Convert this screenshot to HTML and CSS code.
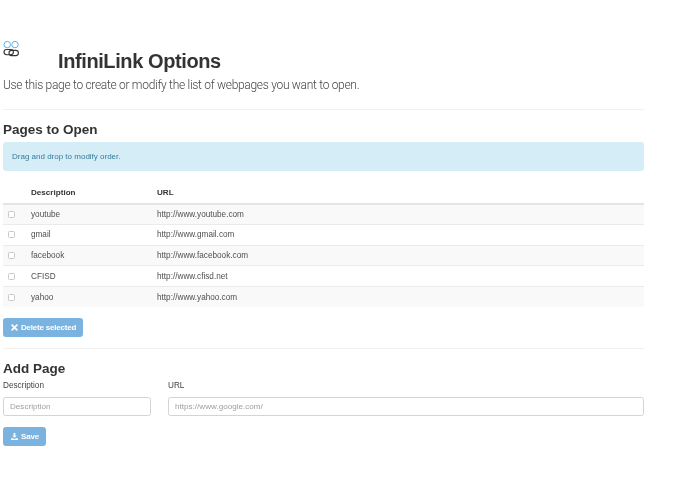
FILE: index.html
```html
<!DOCTYPE html>
<html lang="en">
<head>
<meta charset="utf-8">
<title>InfiniLink Options</title>
<link rel="stylesheet" href="styles.css">
</head>
<body>
<main class="page">
  <header class="head">
    <svg class="logo" width="18" height="16" viewBox="0 0 18 16" fill="none" stroke-width="1">
      <g stroke="#62b0ea"><circle cx="4.3" cy="3.6" r="3.2"/><circle cx="12" cy="3.6" r="3.2"/></g>
      <g stroke="#333" stroke-width="1.1"><rect x="1" y="8.5" width="9.4" height="5.2" rx="2.6"/><rect x="6" y="9.4" width="9.4" height="5.2" rx="2.6"/></g>
    </svg>
    <h1 class="title">InfiniLink Options</h1>
  </header>
  <p class="lead">Use this page to create or modify the list of webpages you want to open.</p>
  <hr class="rule rule-top">
  <h2 class="section">Pages to Open</h2>
  <div class="alert">Drag and drop to modify order.</div>
  <table class="pages">
    <thead>
      <tr><th class="c-check"></th><th class="c-desc">Description</th><th>URL</th></tr>
    </thead>
    <tbody>
      <tr><td><span class="check"></span></td><td>youtube</td><td>http://www.youtube.com</td></tr>
      <tr><td><span class="check"></span></td><td>gmail</td><td>http://www.gmail.com</td></tr>
      <tr><td><span class="check"></span></td><td>facebook</td><td>http://www.facebook.com</td></tr>
      <tr><td><span class="check"></span></td><td>CFISD</td><td>http://www.cfisd.net</td></tr>
      <tr><td><span class="check"></span></td><td>yahoo</td><td>http://www.yahoo.com</td></tr>
    </tbody>
  </table>
  <button class="btn" type="button">
    <svg class="ico" width="7" height="7" viewBox="0 0 7 7"><path d="M1.2 0 3.5 2.2 5.8 0 7 1.2 4.7 3.5 7 5.8 5.8 7 3.5 4.7 1.2 7 0 5.8 2.3 3.5 0 1.2Z" fill="currentColor"/></svg>
    Delete selected
  </button>
  <hr class="rule rule-mid">
  <h2 class="section section-add">Add Page</h2>
  <form class="form">
    <label class="field field-desc"><span class="label">Description</span><input class="input" type="text" placeholder="Description"></label>
    <label class="field field-url"><span class="label">URL</span><input class="input" type="text" placeholder="https://www.google.com/"></label>
  </form>
  <button class="btn btn-save" type="button">
    <svg class="ico" width="7" height="7" viewBox="0 0 9 9"><path d="M3.4 0H5.6V3.4H7.4L4.5 6.2 1.6 3.4H3.4ZM0 6.6H2.4L4.5 7.8 6.6 6.6H9V9H0Z" fill="currentColor"/></svg>
    Save
  </button>
</main>
</body>
</html>
```
FILE: styles.css
```css
* { box-sizing: border-box; }
html, body { margin: 0; background: #fff; }
body { font-family: "Liberation Sans", Arial, sans-serif; color: #333; font-size: 8.2px; }
.page { width: 644px; padding: 41px 0 0 3px; filter: blur(0.3px); }
.head { display: flex; align-items: flex-start; height: 33px; }
.logo { flex: none; display: block; }
.title { margin: 8px 0 0 37px; font-size: 20px; line-height: 24px; font-weight: 700; letter-spacing: -0.4px; color: #333; }
.lead { margin: 3px 0 0; font-family: Roboto, "Liberation Sans", sans-serif; font-size: 12px; line-height: 17px; font-weight: 300; letter-spacing: -0.3px; color: #444; }
.rule { border: 0; border-top: 1px solid #f1f1f1; margin: 0; }
.rule-top { margin-top: 15px; }
.section { margin: 11px 0 0; font-size: 13.5px; line-height: 18px; font-weight: 700; color: #333; }
.alert { margin-top: 3px; height: 29px; line-height: 29px; padding-left: 9px; font-size: 8px; background: #d5edf7; border-radius: 3px; color: #3b7a9a; }
.pages { width: 100%; margin-top: 10px; border-collapse: collapse; table-layout: fixed; }
.pages th { height: 22.5px; text-align: left; font-size: 8.1px; font-weight: 700; border-bottom: 2px solid #e4e4e4; padding: 1px 0 0; }
.pages td { height: 20.8px; padding: 0; border-top: 1px solid #ebebeb; color: #505050; }
.pages tbody tr:first-child td { border-top: 0; }
.pages tbody tr:nth-child(odd) { background: #f9f9f9; }
.c-check { width: 28px; }
.c-desc { width: 126px; }
.check { display: block; width: 7px; height: 7px; margin-left: 5px; background: #fff; border: 1px solid #c8c8c8; border-radius: 1.5px; }
.btn { display: flex; align-items: center; gap: 3px; height: 19px; margin-top: 10.5px; padding: 0 6px 0 7px; font: 700 8px "Liberation Sans", Arial, sans-serif; letter-spacing: -0.2px; color: #fff; background: #7ab3e0; border: 1px solid #7ab3e0; border-radius: 2.5px; }
.ico { display: block; flex: none; }
.rule-mid { margin-top: 11px; }
.section-add { margin-top: 11px; }
.form { display: flex; gap: 17px; margin-top: 1px; }
.field { display: block; }
.field-desc { flex: none; width: 148px; }
.field-url { flex: 1; }
.label { display: block; height: 13px; line-height: 13px; margin-bottom: 5px; color: #444; }
.input { display: block; width: 100%; height: 19px; padding: 0 6px; font: 8.1px "Liberation Sans", Arial, sans-serif; color: #555; background: #fff; border: 1px solid #d4d4d4; border-radius: 2.5px; }
.input::placeholder { color: #a0a0a0; opacity: 1; }
.btn-save { margin-top: 11.5px; }
```
